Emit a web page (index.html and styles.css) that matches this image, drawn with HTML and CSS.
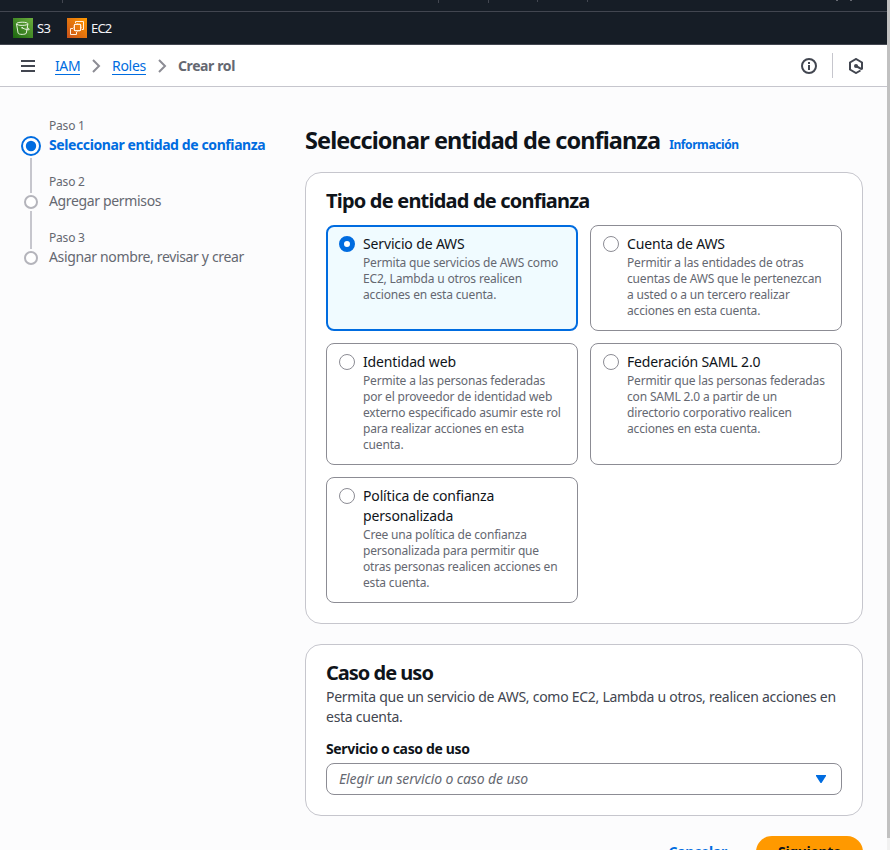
FILE: index.html
```html
<!DOCTYPE html>
<html lang="es">
<head>
<meta charset="utf-8">
<title>Crear rol | IAM</title>
<link rel="stylesheet" href="styles.css">
</head>
<body>
<div class="page">
  <header class="global-nav">
    <svg class="nav-edge" width="887" height="11" viewBox="0 0 887 11" fill="#424650">
      <path d="M62 0h1v3h-1zM438 0h1v3h-1zM488 0h1v3h-1zM537 0h1v2h-1zM587 0h1v2h-1z"/>
      <path d="M836 0h2v1h-2zM850 0h2v1h-2z" fill="#656871"/>
    </svg>
    <nav class="favorites">
      <a class="favorite">
        <svg width="20" height="20" viewBox="0 0 20 20" fill="none" stroke="#e8f3df" stroke-width="1">
          <defs><linearGradient id="s3" x1="0" y1="1" x2="1" y2="0"><stop stop-color="#1b660f"/><stop offset="1" stop-color="#6cae3e"/></linearGradient></defs>
          <rect width="20" height="20" fill="url(#s3)" stroke="none"/>
          <ellipse cx="9.2" cy="5.8" rx="5.7" ry="1.6"/>
          <path d="M3.5 6l1.6 9.1c.3 1.7 7.9 1.7 8.2 0L14.9 6M9.2 9.8c2.5 1.4 6.5 2.700 7 1.700.3-.6-1-1.400-2.100-1.900"/>
          <circle cx="9.1" cy="9.7" r=".8" fill="#fff" stroke="none"/>
        </svg>
        <span class="s3-label">S3</span>
      </a>
      <a class="favorite">
        <svg width="20" height="20" viewBox="0 0 20 20" fill="none" stroke="#fff0df" stroke-width="1">
          <defs><linearGradient id="ec2" x1="0" y1="1" x2="1" y2="0"><stop stop-color="#c8511b"/><stop offset="1" stop-color="#f90"/></linearGradient></defs>
          <rect width="20" height="20" fill="url(#ec2)" stroke="none"/>
          <path d="M6 10.5H3.5v6h6V14M8.500 5V3.500h8v8H15"/>
          <rect x="7.500" y="6.500" width="6" height="6"/>
          <path stroke-width=".6" d="M9 5v1.500M10.500 5v1.500M12 5v1.500M9 12.500V14M10.500 12.500V14M12 12.500V14M6 8h1.500M6 9.500h1.500M6 11h1.500M13.500 8H15M13.500 9.500H15M13.500 11H15"/>
        </svg>
        <span class="ec2-label">EC2</span>
      </a>
    </nav>
  </header>

  <div class="toolbar">
    <svg class="menu" width="14" height="12" viewBox="0 0 14 12" fill="#424650"><path d="M0 0h14v2H0zM0 5h14v2H0zM0 10h14v2H0z"/></svg>
    <nav class="breadcrumbs">
      <a class="crumb-iam">IAM</a>
      <svg width="9" height="14" viewBox="0 0 9 14" fill="none" stroke="#8c8c94" stroke-width="2"><path d="M1 1l6 6-6 6"/></svg>
      <a class="crumb-roles">Roles</a>
      <svg width="9" height="14" viewBox="0 0 9 14" fill="none" stroke="#8c8c94" stroke-width="2"><path d="M1 1l6 6-6 6"/></svg>
      <span class="crumb-current">Crear rol</span>
    </nav>
    <div class="tools">
      <svg width="16" height="16" viewBox="0 0 16 16" fill="none" stroke="#424650" stroke-width="2"><circle cx="8" cy="8" r="7"/><path d="M8 4v2M8 7v5" /></svg>
      <i class="divider"></i>
      <svg width="16" height="16" viewBox="0 0 16 16" fill="none" stroke="#424650" stroke-width="2"><path d="M12.500 12.500L8 15l-6-3.500v-7L8 1l6 3.500v7M8 8l6 3.300"/><circle cx="8" cy="8" r="2" fill="#424650" stroke="none"/></svg>
    </div>
  </div>

  <div class="content">
    <ol class="steps">
      <li class="step active">
        <span class="step-number">Paso 1</span>
        <div class="marker"><svg width="20" height="20" viewBox="0 0 20 20"><circle cx="10" cy="10" r="9" fill="#fff" stroke="#006ce0" stroke-width="2"/><circle cx="10" cy="10" r="5.200" fill="#006ce0"/></svg></div>
        <span class="step-title">Seleccionar entidad de confianza</span>
        <i class="line first"></i>
      </li>
      <li class="step">
        <span class="step-number">Paso 2</span>
        <div class="marker"><svg width="14" height="14" viewBox="0 0 14 14"><circle cx="7" cy="7" r="6" fill="#fff" stroke="#b4b4bb" stroke-width="2"/></svg></div>
        <span class="step-title">Agregar permisos</span>
        <i class="line"></i>
      </li>
      <li class="step">
        <span class="step-number">Paso 3</span>
        <div class="marker"><svg width="14" height="14" viewBox="0 0 14 14"><circle cx="7" cy="7" r="6" fill="#fff" stroke="#b4b4bb" stroke-width="2"/></svg></div>
        <span class="step-title">Asignar nombre, revisar y crear</span>
      </li>
    </ol>

    <main class="main">
      <div class="heading"><h1>Seleccionar entidad de confianza</h1><a class="info">Información</a></div>

      <section class="card">
        <h2 class="h-type">Tipo de entidad de confianza</h2>
        <div class="tiles">
          <label class="tile selected">
            <i class="radio"></i>
            <span class="tile-title">Servicio de AWS</span>
            <span class="tile-text">Permita que servicios de AWS como<br>EC2, Lambda u otros realicen<br>acciones en esta cuenta.</span>
          </label>
          <label class="tile">
            <i class="radio"></i>
            <span class="tile-title">Cuenta de AWS</span>
            <span class="tile-text">Permitir a las entidades de otras<br>cuentas de AWS que le pertenezcan<br>a usted o a un tercero realizar<br>acciones en esta cuenta.</span>
          </label>
          <label class="tile">
            <i class="radio"></i>
            <span class="tile-title">Identidad web</span>
            <span class="tile-text">Permite a las personas federadas<br>por el proveedor de identidad web<br>externo especificado asumir este rol<br>para realizar acciones en esta<br>cuenta.</span>
          </label>
          <label class="tile">
            <i class="radio"></i>
            <span class="tile-title">Federación SAML 2.0</span>
            <span class="tile-text">Permitir que las personas federadas<br>con SAML 2.0 a partir de un<br>directorio corporativo realicen<br>acciones en esta cuenta.</span>
          </label>
          <label class="tile">
            <i class="radio"></i>
            <span class="tile-title">Política de confianza<br>personalizada</span>
            <span class="tile-text">Cree una política de confianza<br>personalizada para permitir que<br>otras personas realicen acciones en<br>esta cuenta.</span>
          </label>
        </div>
      </section>

      <section class="card use-case">
        <h2 class="h-use">Caso de uso</h2>
        <p class="description">Permita que un servicio de AWS, como EC2, Lambda u otros, realicen acciones en<br>esta cuenta.</p>
        <div class="field-label">Servicio o caso de uso</div>
        <div class="select"><span>Elegir un servicio o caso de uso</span><svg width="10" height="8" viewBox="0 0 10 8" fill="#006ce0"><path d="M0 0h10v1L5.500 8h-1L0 1z"/></svg></div>
      </section>

      <div class="actions"><a class="cancel">Cancelar</a><button class="next">Siguiente</button></div>
    </main>
  </div>
  <div class="scrollbar"></div>
</div>
</body>
</html>
```

FILE: styles.css
```css
* { box-sizing: border-box; }
body { margin: 0; background: #fcfcfd; font: 14px/20px "Noto Sans", "Open Sans", sans-serif; color: #0f141a; }
.page { position: relative; height: 850px; overflow: hidden; white-space: nowrap; }
h1, h2, p, ol { margin: 0; padding: 0; }
svg { display: block; flex: none; }

.global-nav { height: 45px; background: #161d26; border-bottom: 1px solid #424650; }
.favorites { display: flex; height: 33px; border-top: 1px solid #424650; padding: 6px 13px; gap: 17px; }
.favorite { display: flex; align-items: center; gap: 4px; height: 20px; color: #f3f3f7; font-size: 13px; }
.s3-label { letter-spacing: -.6px; width: 13px; }
.ec2-label { letter-spacing: -.8px; }

.toolbar { display: flex; align-items: center; height: 42px; background: #fff; border-bottom: 1px solid #c6c6cd; padding: 0 26px 0 21px; }
.breadcrumbs { display: flex; align-items: center; margin-left: 20px; }
.breadcrumbs a { color: #006ce0; line-height: 17px; border-bottom: 1px solid #006ce0; }
.breadcrumbs svg { margin: 0 11px 0 12px; }
.crumb-iam { width: 25px; letter-spacing: -.4px; }
.crumb-roles { width: 34px; letter-spacing: -.3px; }
.crumb-current { color: #656871; font-weight: 700; letter-spacing: -.4px; }
.tools { display: flex; align-items: center; gap: 15px; margin-left: auto; }
.divider { width: 1px; height: 25px; background: #c6c6cd; }

.content { display: flex; padding: 31px 27px 0 21px; gap: 40px; }
.steps { list-style: none; width: 244px; flex: none; }
.step { display: grid; grid-template-columns: 20px 1fr; grid-template-rows: 16px 20px 20px; column-gap: 8px; position: relative; color: #656871; }
.step-number { grid-column: 2; font-size: 12px; line-height: 16px; letter-spacing: -.2px; }
.marker { display: grid; place-items: center; height: 24px; }
.step-title { line-height: 21px; letter-spacing: -.35px; }
.active .step-title { color: #006ce0; font-weight: 700; letter-spacing: -.4px; }
.line { position: absolute; left: 9px; top: 37px; width: 2px; height: 38px; background: #c6c6cd; }
.line.first { top: 40px; height: 35px; }

.main { width: 558px; flex: none; }
.heading { display: flex; align-items: baseline; gap: 9px; height: 54px; padding-top: 7px; }
h1 { font-size: 23.5px; line-height: 30px; font-weight: 700; letter-spacing: -.92px; }
.info { color: #006ce0; font-size: 12px; font-weight: 700; letter-spacing: -.4px; }
.card { background: #fff; border: 1px solid #c6c6cd; border-radius: 16px; height: 452px; padding: 16px 20px 20px; }
h2 { font-size: 20px; line-height: 24px; font-weight: 700; letter-spacing: -.8px; }
.h-use { letter-spacing: -1px; }
.tiles { display: grid; grid-template-columns: 252px 252px; grid-template-rows: 106px 122px 126px; gap: 12px; margin-top: 12px; }
.tile { border: 1px solid #8c8c94; border-radius: 8px; display: grid; grid-template-columns: 16px 1fr; grid-auto-rows: max-content; column-gap: 8px; padding: 8px 12px; }
.tile.selected { background: #f0fbff; border: 2px solid #006ce0; padding: 7px 11px; }
.radio { width: 16px; height: 16px; border: 1px solid #8c8c94; border-radius: 50%; margin-top: 2px; background: #fff; }
.selected .radio { border: 5px solid #006ce0; }
.tile-title { letter-spacing: -.15px; }
.tile-text { grid-column: 2; font-size: 12px; line-height: 16px; color: #656871; margin-top: 1px; letter-spacing: -.17px; }
.use-case { height: 172px; margin-top: 20px; }
.description { color: #424650; letter-spacing: -.27px; margin-top: 2px; }
.field-label { font-weight: 700; letter-spacing: -.36px; margin-top: 12px; }
.select { display: flex; align-items: center; justify-content: space-between; height: 32px; margin-top: 4px; padding: 0 15px 0 12px; border: 1px solid #8c8c94; border-radius: 8px; color: #656871; font-style: italic; letter-spacing: -.12px; }
.actions { display: flex; justify-content: flex-end; align-items: center; gap: 29px; margin-top: 20px; font-weight: 700; }
.cancel { color: #006ce0; letter-spacing: -.3px; }
.next { width: 107px; height: 32px; border: 0; border-radius: 16px; background: #f90; color: #0f141a; font: inherit; padding: 0; letter-spacing: -.35px; }
.scrollbar { position: absolute; right: 0; top: 0; width: 3px; height: 850px; background: linear-gradient(#c1c1c1 838px, #f1f1f1 838px); }
```
